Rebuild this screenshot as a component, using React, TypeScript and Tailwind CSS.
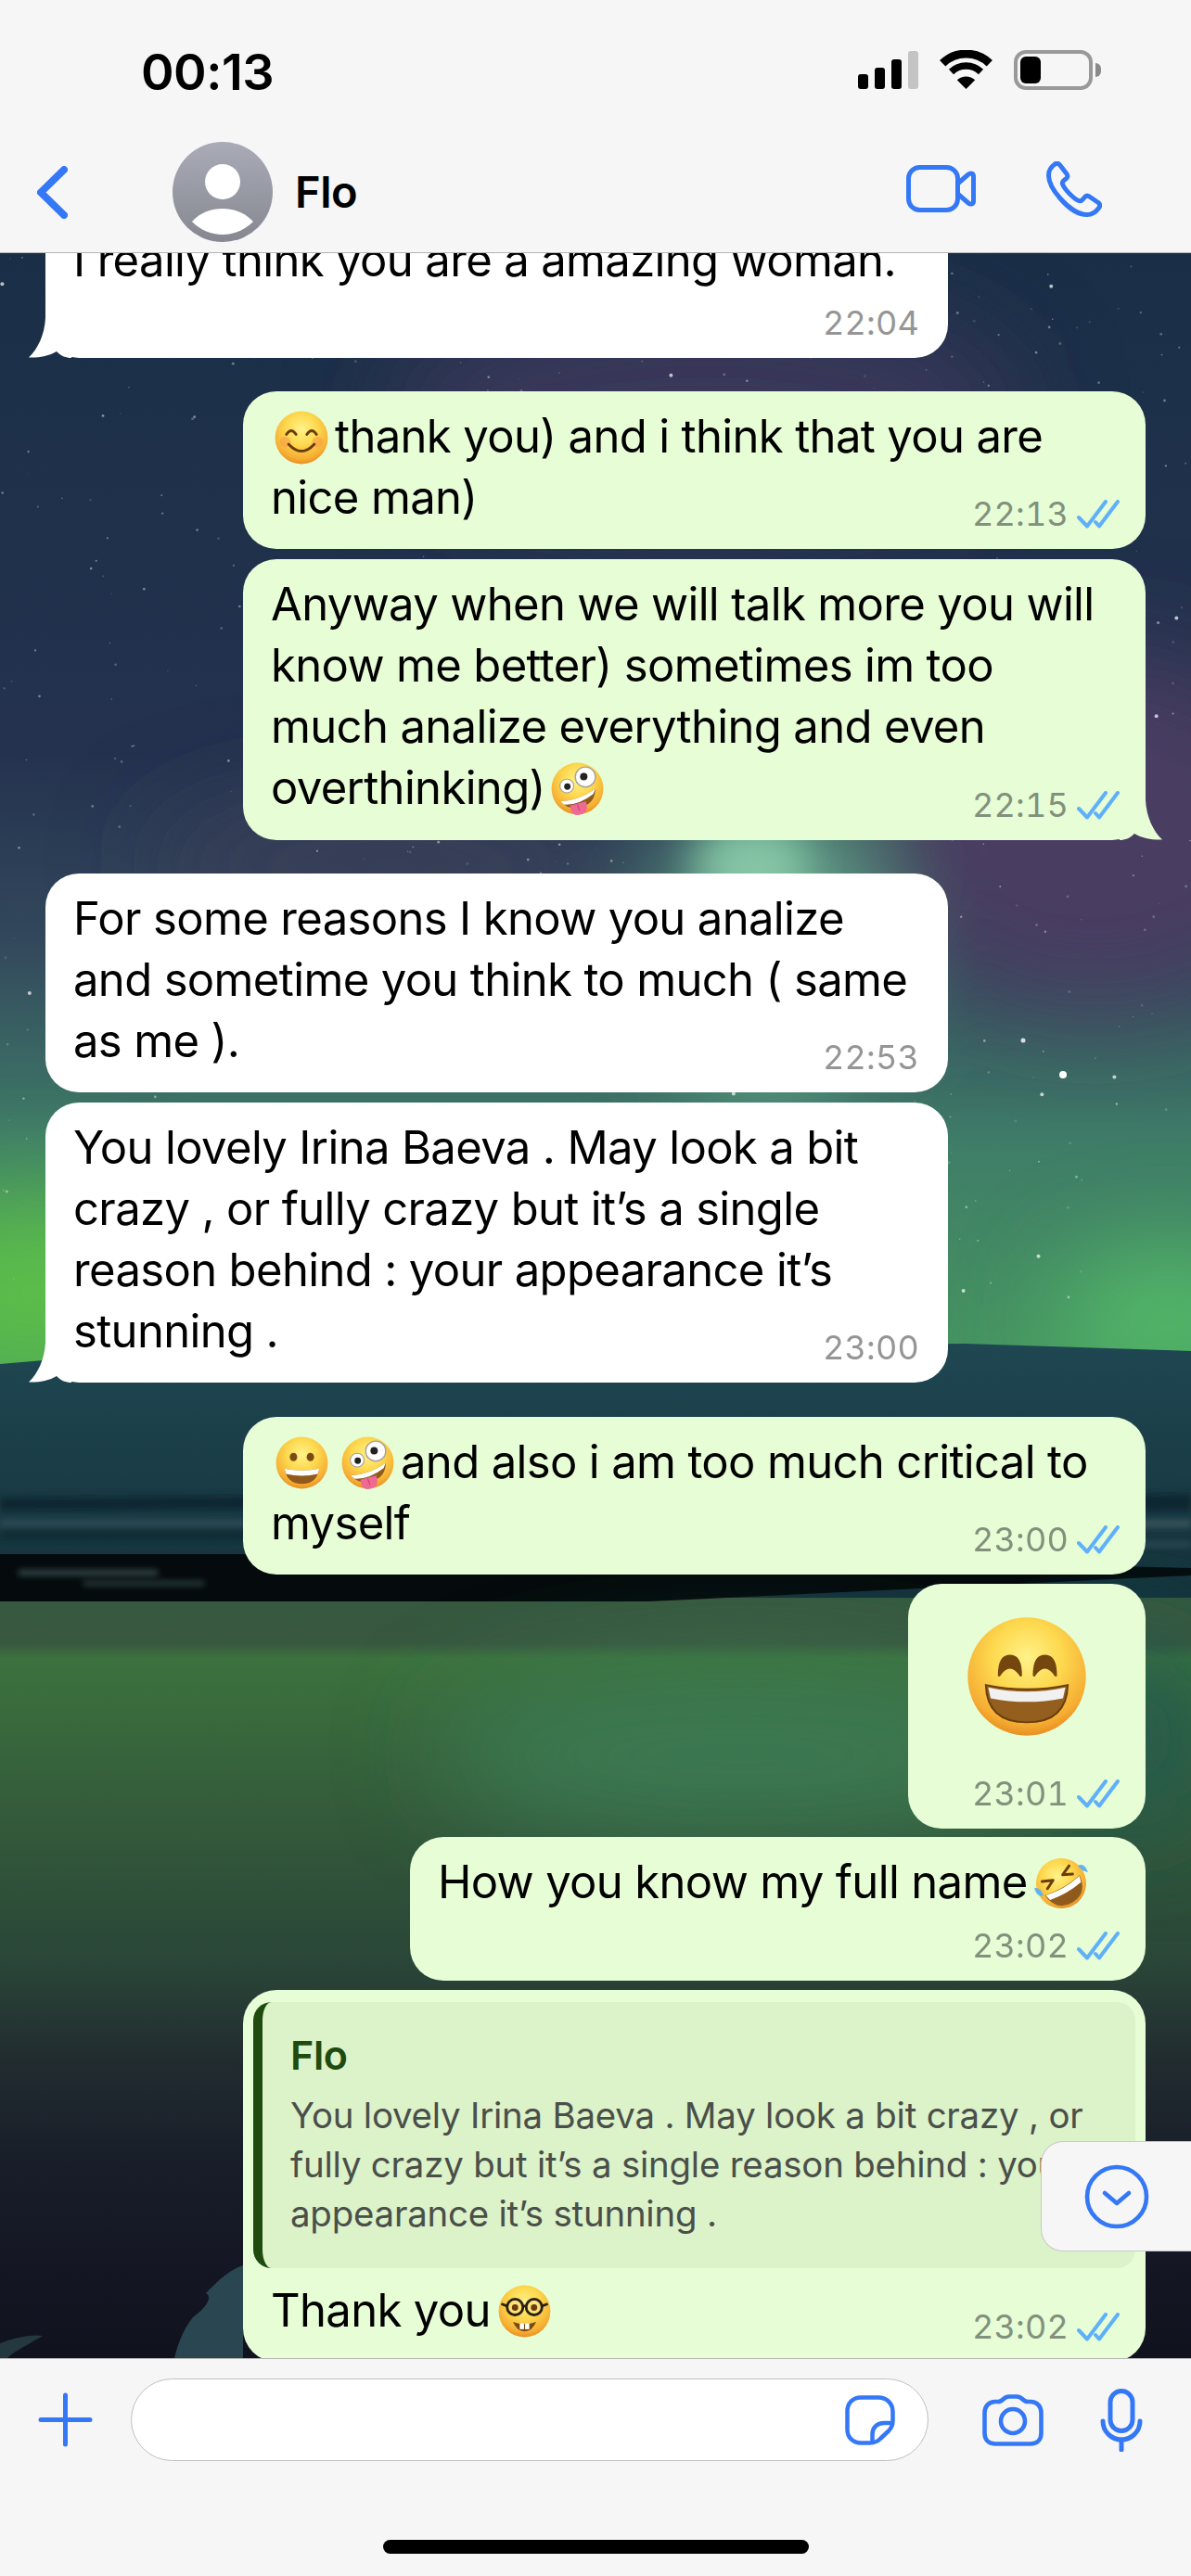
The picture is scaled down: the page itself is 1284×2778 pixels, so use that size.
import type { ReactNode } from "react";

const BLUE = "#3478f6";

// stars for the wallpaper, fixed seed so that each run is the same
function makeStars() {
    const stars: { x: number; y: number; r: number; o: number }[] = [];
    let seed = 17;
    const rnd = () => {
        seed = (seed * 16807) % 2147483647;
        return seed / 2147483647;
    };
    for (let i = 0; i < 620; i++) {
        const big = rnd() > 0.95;
        stars.push({
            x: rnd() * 1284,
            y: rnd() * 1130,
            r: big ? 2 : 0.6 + rnd() * 0.9,
            o: big ? 0.7 : 0.12 + rnd() * 0.35,
        });
    }
    return stars;
}

const stars = makeStars();

function Wallpaper() {
    return (
        <svg className="absolute inset-0 w-full h-full" viewBox="0 0 1284 2270" preserveAspectRatio="none">
            <defs>
                <linearGradient id="sky" x1="0" y1="0" x2="0" y2="1">
                    <stop offset="0" stopColor="#1a2f47" />
                    <stop offset="0.45" stopColor="#24324f" />
                    <stop offset="0.62" stopColor="#33485c" />
                    <stop offset="0.8" stopColor="#3f7d68" />
                    <stop offset="1" stopColor="#479660" />
                </linearGradient>
                <linearGradient id="sea" x1="0" y1="0" x2="0" y2="1">
                    <stop offset="0" stopColor="#1f4752" />
                    <stop offset="1" stopColor="#143039" />
                </linearGradient>
                <linearGradient id="land" x1="0" y1="0" x2="0" y2="1">
                    <stop offset="0" stopColor="#36593f" />
                    <stop offset="0.06" stopColor="#38583f" />
                    <stop offset="0.08" stopColor="#3c723e" />
                    <stop offset="0.3" stopColor="#33593a" />
                    <stop offset="0.48" stopColor="#2a4638" />
                    <stop offset="0.6" stopColor="#222d30" />
                    <stop offset="0.75" stopColor="#181d29" />
                    <stop offset="1" stopColor="#10121e" />
                </linearGradient>
                <filter id="soft" x="-50%" y="-50%" width="200%" height="200%">
                    <feGaussianBlur stdDeviation="55" />
                </filter>
                <filter id="softer" x="-50%" y="-50%" width="200%" height="200%">
                    <feGaussianBlur stdDeviation="20" />
                </filter>
                <filter id="streak" x="-20%" y="-50%" width="140%" height="200%">
                    <feGaussianBlur stdDeviation="3" />
                </filter>
            </defs>

            <rect width="1284" height="1200" fill="url(#sky)" />
            <g filter="url(#soft)">
                <ellipse cx="760" cy="170" rx="340" ry="120" fill="#3e3b5e" opacity="0.85" />
                <ellipse cx="1180" cy="620" rx="240" ry="190" fill="#4a3d62" opacity="1" />
                <ellipse cx="420" cy="660" rx="260" ry="70" fill="#3f3f58" opacity="0.7" />
                <ellipse cx="830" cy="740" rx="110" ry="170" fill="#6fb892" opacity="0.9" />
                <ellipse cx="40" cy="1120" rx="170" ry="110" fill="#5cc048" opacity="0.95" />
                <ellipse cx="1260" cy="1150" rx="120" ry="70" fill="#55c06a" opacity="0.9" />
            </g>
            <g filter="url(#softer)">
                <ellipse cx="810" cy="660" rx="60" ry="45" fill="#8fd0ae" opacity="0.8" />
            </g>

            <path d="M0 1198 L140 1186 L420 1194 L760 1180 L1040 1176 L1284 1184 V1470 H0 Z" fill="url(#sea)" />
            <g filter="url(#streak)">
                <path d="M0 1342 L300 1340 L700 1348 L1284 1338 V1356 L700 1360 L300 1354 L0 1356 Z" fill="#0e2630" />
                <rect x="0" y="1366" width="560" height="7" fill="#2d4c54" />
                <rect x="0" y="1378" width="400" height="9" fill="#0f2a33" />
                <rect x="1040" y="1366" width="244" height="8" fill="#37525a" />
                <rect x="1040" y="1390" width="244" height="5" fill="#2d4c54" />
            </g>
            <rect y="1450" width="1284" height="820" fill="url(#land)" />
            <path d="M0 1403 H700 L1284 1418 V1426 L700 1454 H0 Z" fill="#050b0d" />
            <g filter="url(#streak)">
                <rect x="20" y="1420" width="150" height="6" fill="#33474a" />
                <rect x="90" y="1432" width="130" height="5" fill="#2a3d3e" />
            </g>
            <g filter="url(#soft)">
                <ellipse cx="800" cy="1620" rx="330" ry="90" fill="#3f8058" opacity="0.75" />
                <ellipse cx="1220" cy="1600" rx="100" ry="110" fill="#1f5850" opacity="0.8" />
            </g>
            <path d="M262 2170 C244 2176 232 2190 222 2200 C230 2204 222 2216 208 2226 C198 2238 192 2254 188 2270 H262 Z" fill="#2a4650" />
            <path d="M0 2254 C16 2248 32 2244 46 2246 C30 2256 16 2262 8 2270 H0 Z" fill="#24383f" />

            {stars.map((s, i) => (
                <circle key={i} cx={s.x} cy={s.y} r={s.r} fill="#ffffff" opacity={s.o} />
            ))}
            <circle cx="1146" cy="886" r="4" fill="#ffffff" />
            <circle cx="1103" cy="849" r="2.5" fill="#ffffff" opacity="0.8" />
        </svg>
    );
}

function Defs() {
    return (
        <svg className="absolute w-0 h-0">
            <defs>
                <radialGradient id="face" cx="50%" cy="34%" r="66%">
                    <stop offset="0" stopColor="#fff28a" />
                    <stop offset="0.45" stopColor="#fdd94f" />
                    <stop offset="0.85" stopColor="#f6ae33" />
                    <stop offset="1" stopColor="#e88f22" />
                </radialGradient>
            </defs>
        </svg>
    );
}

function Face({ size, children, className = "" }: { size: number; children: ReactNode; className?: string }) {
    return (
        <svg viewBox="0 0 100 100" width={size} height={size} className={"inline-block align-middle " + className}>
            <circle cx="50" cy="50" r="49" fill="url(#face)" />
            {children}
        </svg>
    );
}

function Smiling() {
    return (
        <Face size={58} className="-mt-[6px] ml-[4px] mr-[7px]">
            <circle cx="20" cy="58" r="10" fill="#f59a4a" opacity="0.55" />
            <circle cx="80" cy="58" r="10" fill="#f59a4a" opacity="0.55" />
            <path d="M22 44 Q31 30 40 44 M60 44 Q69 30 78 44" fill="none" stroke="#6b3d0e" strokeWidth="5" strokeLinecap="round" />
            <path d="M26 62 Q50 88 74 62" fill="none" stroke="#6b3d0e" strokeWidth="5" strokeLinecap="round" />
        </Face>
    );
}

function Grinning() {
    return (
        <Face size={57} className="-mt-[6px] ml-[5px] mr-[14px]">
            <ellipse cx="34" cy="39" rx="7" ry="8" fill="#7a4a12" />
            <ellipse cx="66" cy="39" rx="7" ry="8" fill="#7a4a12" />
            <path d="M17 61 Q50 68 83 61 Q78 90 50 90 Q22 90 17 61 Z" fill="#8f5a1c" />
            <path d="M17 61 Q50 68 83 61 L80 71 Q50 78 20 71 Z" fill="#ffffff" />
        </Face>
    );
}

function Zany({ className = "" }: { className?: string }) {
    return (
        <Face size={57} className={"-mt-[6px] " + className}>
            <circle cx="30" cy="45" r="13" fill="#fff" stroke="#a8a39a" strokeWidth="2" />
            <circle cx="31" cy="46" r="6" fill="#222" />
            <circle cx="65" cy="28" r="19" fill="#fff" stroke="#a8a39a" strokeWidth="2.5" />
            <circle cx="62" cy="27" r="7" fill="#222" />
            <path d="M18 74 Q55 72 84 50 Q84 76 60 84 Q34 92 18 74 Z" fill="#8f5a1c" />
            <path d="M18 74 Q55 72 84 50 L80 60 Q52 82 24 80 Z" fill="#ffffff" />
            <path d="M36 82 L66 74 Q72 92 60 98 Q44 104 38 92 Z" fill="#ee6a95" />
            <path d="M50 80 L54 92" stroke="#c9446f" strokeWidth="2" />
        </Face>
    );
}

function Beaming() {
    return (
        <Face size={130}>
            <path d="M27 49 Q27 33 36 33 Q45 33 45 49 Q36 36 27 49 Z" fill="#74470f" stroke="#74470f" strokeWidth="2" strokeLinejoin="round" />
            <path d="M56 49 Q56 33 65 33 Q74 33 74 49 Q65 36 56 49 Z" fill="#74470f" stroke="#74470f" strokeWidth="2" strokeLinejoin="round" />
            <path d="M16 57 Q50 64 84 57 Q83 88 50 88 Q17 88 16 57 Z" fill="#935e1e" stroke="#6a3f0c" strokeWidth="1.5" />
            <path d="M18 59 Q50 66 82 59 L80 68 Q50 74 20 68 Z" fill="#f1f1f1" />
        </Face>
    );
}

function Rofl() {
    return (
        <svg viewBox="0 0 100 100" width={60} height={60} className="inline-block align-middle -mt-[6px] ml-[6px]">
            <g transform="rotate(-30 50 50)">
                <circle cx="50" cy="50" r="45" fill="url(#face)" />
                <path d="M22 30 L40 38 L24 46 M78 30 L60 38 L76 46" fill="none" stroke="#6b3d0e" strokeWidth="5" strokeLinecap="round" strokeLinejoin="round" />
                <path d="M14 54 Q50 62 86 54 Q82 90 50 90 Q18 90 14 54 Z" fill="#8f5a1c" />
                <path d="M15 55 Q50 63 85 55 L82 66 Q50 72 18 66 Z" fill="#ffffff" />
            </g>
            <path d="M2 58 Q14 58 18 72 Q6 76 2 58 Z" fill="#5fb4ee" />
            <path d="M98 30 Q86 28 80 18 Q92 12 98 30 Z" fill="#5fb4ee" />
        </svg>
    );
}

function Nerd() {
    return (
        <Face size={57} className="-mt-[6px] ml-[8px]">
            <circle cx="32" cy="42" r="15" fill="#fde27a" stroke="#2a2113" strokeWidth="5" />
            <circle cx="68" cy="42" r="15" fill="#fde27a" stroke="#2a2113" strokeWidth="5" />
            <path d="M47 40 H53 M6 36 L17 40 M94 36 L83 40" stroke="#2a2113" strokeWidth="5" />
            <circle cx="32" cy="43" r="6" fill="#6b3d0e" />
            <circle cx="68" cy="43" r="6" fill="#6b3d0e" />
            <path d="M28 70 Q50 78 72 70 Q64 88 50 88 Q36 88 28 70 Z" fill="#7a4a12" />
            <rect x="41" y="73" width="8" height="11" fill="#fff" />
            <rect x="51" y="73" width="8" height="11" fill="#fff" />
        </Face>
    );
}

function Checks() {
    return (
        <svg width="46" height="31" viewBox="0 0 46 31" fill="none" stroke="#5fb0fa" strokeWidth="4" strokeLinecap="round" strokeLinejoin="round">
            <path d="M2 19 L11 28.5 L31 2" />
            <path d="M20 24 L24 28.5 L44 2" />
        </svg>
    );
}

function Meta({ time, mine }: { time: string; mine?: boolean }) {
    if (mine) {
        return (
            <div className="absolute right-[28px] bottom-[22px] flex items-center gap-[9px]">
                <span className="text-[36px] leading-[32px] text-[#82907c] tabular-nums tracking-[0.2px]">{time}</span>
                <Checks />
            </div>
        );
    }
    return (
        <div className="absolute right-[31px] bottom-[22px] flex items-center">
            <span className="text-[36px] leading-[32px] text-[#959595] tabular-nums tracking-[0.2px]">{time}</span>
        </div>
    );
}

function Sent({ time, className = "", tail, children }: { time: string; className?: string; tail?: boolean; children: ReactNode }) {
    return (
        <div className={"relative self-end mr-[49px] bg-[#e6fdd6] rounded-[36px] pl-[30px] pr-[30px] pt-[16px] pb-[22px] " + className}>
            {children}
            <Meta time={time} mine />
            {tail && (
                <svg className="absolute -right-[18px] bottom-0" width="46" height="60" viewBox="0 0 46 60">
                    <path d="M28 0 H0 V60 C6 60 11 58 16 53 C24 58 36 60 46 59.5 C36 50 29 35 28 17 Z" fill="#e6fdd6" />
                </svg>
            )}
        </div>
    );
}

function Received({ time, className = "", tail, children }: { time: string; className?: string; tail?: boolean; children: ReactNode }) {
    return (
        <div className={"relative ml-[49px] w-[973px] bg-white rounded-[36px] pl-[30px] pr-[30px] pt-[16px] pb-[22px] " + className}>
            {children}
            <Meta time={time} />
            {tail && (
                <svg className="absolute -left-[18px] bottom-0" width="46" height="60" viewBox="0 0 46 60">
                    <path d="M18 0 H46 V60 C40 60 35 58 30 53 C22 58 10 60 0 59.5 C10 50 17 35 18 17 Z" fill="#ffffff" />
                </svg>
            )}
        </div>
    );
}

function ScrollDown() {
    return (
        <div className="absolute right-0 top-[2036px] w-[162px] h-[119px] bg-[#f6f6f6] border border-r-0 border-[#c9c9c9] rounded-l-[24px] flex items-center pl-[46px]">
            <svg width="70" height="70" viewBox="0 0 70 70" fill="none" stroke={BLUE} strokeWidth="4.6" strokeLinecap="round" strokeLinejoin="round">
                <circle cx="35" cy="35" r="32" />
                <path d="M22 31 L35 42 L48 31" />
            </svg>
        </div>
    );
}

function StatusBar() {
    return (
        <div className="h-[154px] flex items-center justify-between pl-[152px] pr-[97px]">
            <span className="text-[54px] font-semibold tracking-[-0.5px] text-black">00:13</span>
            <div className="flex items-center gap-[23px] -mt-[4px]">
                <div className="flex items-end gap-[7px] h-[41px]">
                    <div className="w-[11px] h-[16px] rounded-[3px] bg-black" />
                    <div className="w-[11px] h-[23px] rounded-[3px] bg-black" />
                    <div className="w-[11px] h-[32px] rounded-[3px] bg-black" />
                    <div className="w-[11px] h-[41px] rounded-[3px] bg-[#c4c4c4]" />
                </div>
                <svg width="57" height="42" viewBox="0 0 57 42">
                    <path d="M3.2 14.3 A36.5 36.5 0 0 1 53.8 14.3" fill="none" stroke="#000" strokeWidth="9" />
                    <path d="M12.5 23.5 A23 23 0 0 1 44.5 23.5" fill="none" stroke="#000" strokeWidth="7.5" />
                    <path d="M28.5 42 L18.8 32.3 A14 14 0 0 1 38.2 32.3 Z" fill="#000" />
                </svg>
                <div className="flex items-center gap-[3px]">
                    <div className="w-[85px] h-[43px] border-[4px] border-[#999999] rounded-[13px] p-[3px]">
                        <div className="w-[22px] h-full bg-black rounded-[6px]" />
                    </div>
                    <div className="w-[6px] h-[15px] bg-[#8a8a8a] rounded-r-full" />
                </div>
            </div>
        </div>
    );
}

function NavBar() {
    return (
        <div className="h-[119px] flex items-center pb-[13px]">
            <svg className="ml-[40px]" width="33" height="57" viewBox="0 0 33 57" fill="none" stroke={BLUE} strokeWidth="8" strokeLinecap="round" strokeLinejoin="round">
                <path d="M29 4 L4 28.5 L29 53" />
            </svg>
            <svg className="ml-[113px]" width="108" height="108" viewBox="0 0 108 108">
                <defs>
                    <linearGradient id="avatar" x1="0" y1="0" x2="0" y2="1">
                        <stop offset="0" stopColor="#a9acb7" />
                        <stop offset="1" stopColor="#858890" />
                    </linearGradient>
                </defs>
                <circle cx="54" cy="54" r="54" fill="url(#avatar)" />
                <circle cx="54" cy="43" r="19" fill="#fff" />
                <path d="M21 86 C30 76 42 72 54 72 C66 72 78 76 87 86 C78 95 66 100 54 100 C42 100 30 95 21 86 Z" fill="#fff" />
            </svg>
            <span className="ml-[24px] text-[47px] font-semibold tracking-[-0.5px] text-black">Flo</span>
            <svg className="ml-auto mb-[7px]" width="75" height="51" viewBox="0 0 75 51" fill="none" stroke={BLUE} strokeWidth="5" strokeLinejoin="round">
                <rect x="2.5" y="2.5" width="53" height="46" rx="12" />
                <path d="M55.5 20 L67 10 C69.5 8 72.5 9 72.5 12 V39 C72.5 42 69.5 43 67 41 L55.5 31" />
            </svg>
            <svg className="ml-[76px] mr-[96px] mb-[7px]" width="60" height="60" viewBox="0 0 60 60" fill="none" stroke={BLUE} strokeWidth="5" strokeLinejoin="round">
                <path d="M9 3.2 C11 1.6 13 2 14.5 3.8 L22 13.5 C23.5 15.5 23 17.5 21 19 C18.5 20.8 16.8 22 17.5 24.5 C19.5 30 29 40 35 42.5 C37.5 43.5 39 41.5 41 39 C42.5 37 44.5 36.5 46.5 38 L56 44.5 C58.5 46.5 58 48.5 56.5 50.5 C53 55 49 57.5 44 57.5 C35 57.5 24 50.5 15 40 C7 31 2.5 22 2.5 15 C2.5 10 5 6 9 3.2 Z" />
            </svg>
        </div>
    );
}

function Composer() {
    return (
        <div className="h-[235px] shrink-0 bg-[#f6f6f6] border-t border-[#b5b5b5] flex flex-col">
            <div className="flex items-center mt-[21px] h-[89px]">
                <svg className="ml-[41px]" width="59" height="59" viewBox="0 0 59 59" fill="none" stroke={BLUE} strokeWidth="5" strokeLinecap="round">
                    <path d="M29.5 3 V56 M3 29.5 H56" />
                </svg>
                <div className="ml-[41px] w-[860px] h-[89px] bg-white border border-[#c0c0c0] rounded-[45px] flex items-center justify-end pr-[35px]">
                    <svg width="54" height="54" viewBox="0 0 54 54" fill="none" stroke={BLUE} strokeWidth="4.5" strokeLinejoin="round">
                        <path d="M17 2.5 H36 C45 2.5 51.5 9 51.5 18 V28 C51.5 32 50 35.5 47 38.5 L38 47 C35 50 31 51.5 27 51.5 H17 C8.5 51.5 2.5 45.5 2.5 37 V17 C2.5 8.5 8.5 2.5 17 2.5 Z" />
                        <path d="M51 30 H42 C34.5 30 29.5 35 29.5 42 V51" />
                    </svg>
                </div>
                <svg className="ml-[58px]" width="66" height="56" viewBox="0 0 66 56" fill="none" stroke={BLUE} strokeWidth="4.6" strokeLinejoin="round">
                    <path d="M14 8 H17 C20 8 21 7 23 5 C25 3 26 2.5 29 2.5 H37 C40 2.5 41 3 43 5 C45 7 46 8 49 8 H52 C59 8 63.5 13 63.5 20 V42 C63.5 49 59 53.5 52 53.5 H14 C7 53.5 2.5 49 2.5 42 V20 C2.5 13 7 8 14 8 Z" />
                    <circle cx="33" cy="29" r="13" />
                </svg>
                <svg className="ml-[61px]" width="46" height="68" viewBox="0 0 46 68" fill="none" stroke={BLUE} strokeWidth="5" strokeLinecap="round">
                    <rect x="11" y="2.5" width="24" height="43" rx="12" />
                    <path d="M3 35 A20 20 0 0 0 43 35" />
                    <path d="M23 55 V66" />
                </svg>
            </div>
            <div className="mt-auto mb-[24px] self-center w-[459px] h-[15px] bg-black rounded-full" />
        </div>
    );
}

export default function App() {
    return (
        <div className="w-[1284px] h-[2778px] flex flex-col overflow-hidden bg-[#f6f6f6] text-black font-['Inter','Liberation_Sans',sans-serif]">
            <Defs />
            <div className="h-[273px] shrink-0 bg-[#f6f6f6] border-b border-[#b5b5b5]">
                <StatusBar />
                <NavBar />
            </div>

            <div className="relative flex-1 overflow-hidden">
                <Wallpaper />
                <div className="relative flex flex-col text-[49px] leading-[66px] tracking-[-0.65px] -mt-[41px]">
                    <Received time="22:04" tail className="pb-[72px]">I really think you are a amazing woman.</Received>

                    <Sent time="22:13" className="w-[973px] mt-[36px]">
                        <Smiling />thank you) and i think that you are<br />nice man)
                    </Sent>
                    <Sent time="22:15" tail className="w-[973px] mt-[11px] pb-[23px]">
                        Anyway when we will talk more you will<br />
                        know me better) sometimes im too<br />
                        much analize everything and even<br />
                        overthinking)<Zany className="ml-[6px]" />
                    </Sent>

                    <Received time="22:53" className="mt-[36px]">
                        For some reasons I know you analize<br />
                        and sometime you think to much ( same<br />
                        as me ).
                    </Received>
                    <Received time="23:00" tail className="mt-[11px]">
                        You lovely Irina Baeva . May look a bit<br />
                        crazy , or fully crazy but it’s a single<br />
                        reason behind : your appearance it’s<br />
                        stunning .
                    </Received>

                    <Sent time="23:00" className="w-[973px] mt-[37px]">
                        <Grinning /><Zany className="mr-[7px]" />and also i am too much critical to<br />myself
                    </Sent>
                    <Sent time="23:01" className="w-[256px] h-[264px] mt-[10px]">
                        <div className="flex justify-center pt-[19px]">
                            <Beaming />
                        </div>
                    </Sent>
                    <Sent time="23:02" className="w-[793px] h-[155px] mt-[9px]">
                        How you know my full name<Rofl />
                    </Sent>

                    <div className="relative self-end mr-[49px] mt-[10px] w-[973px] h-[401px] bg-[#e6fdd6] rounded-[36px] pt-[13px] px-[11px]">
                        <div className="h-[287px] bg-[#dcf2c9] rounded-[20px] border-l-[10px] border-[#1f4b0f] pl-[30px] overflow-hidden">
                            <div className="text-[43px] leading-[50px] font-semibold tracking-[-0.4px] text-[#1f4b0f] pt-[32px]">Flo</div>
                            <div className="text-[38.4px] leading-[53px] tracking-[-0.2px] text-[#4a4f49] mt-[14px] whitespace-nowrap">
                                You lovely Irina Baeva . May look a bit crazy , or<br />
                                fully crazy but it’s a single reason behind : your<br />
                                appearance it’s stunning .
                            </div>
                        </div>
                        <div className="pl-[19px] pt-[13px]">
                            Thank you<Nerd />
                        </div>
                        <Meta time="23:02" mine />
                    </div>
                </div>
                <ScrollDown />
            </div>

            <Composer />
        </div>
    );
}
